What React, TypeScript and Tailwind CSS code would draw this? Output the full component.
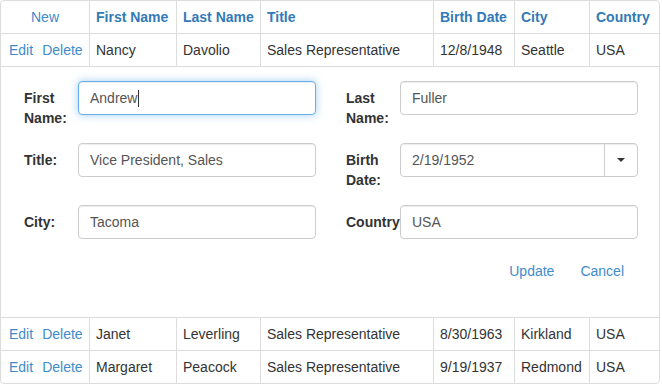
const rows = [
  { first: "Nancy", last: "Davolio", title: "Sales Representative", birth: "12/8/1948", city: "Seattle", country: "USA" },
  { first: "Janet", last: "Leverling", title: "Sales Representative", birth: "8/30/1963", city: "Kirkland", country: "USA" },
  { first: "Margaret", last: "Peacock", title: "Sales Representative", birth: "9/19/1937", city: "Redmond", country: "USA" },
];

const widths = ["w-[88px]", "w-[87px]", "w-[84px]", "w-[173px]", "w-[81px]", "w-[75px]", "w-[70px]"];

const Cell = ({ i, children, className = "" }: { i: number; children?: React.ReactNode; className?: string }) => (
  <div className={`${widths[i]} shrink-0 flex items-center ${i > 0 ? "border-l border-[#ddd] pl-[6px]" : ""} ${className}`}>
    {children}
  </div>
);

const DataRow = ({ r, last }: { r: (typeof rows)[number]; last?: boolean }) => (
  <div className={`flex ${last ? "h-[32px]" : "h-[33px] border-b border-[#ddd]"}`}>
    <Cell i={0} className="pl-[8px] gap-[9px] text-[#428bca]">
      <span>Edit</span>
      <span>Delete</span>
    </Cell>
    <Cell i={1}>{r.first}</Cell>
    <Cell i={2}>{r.last}</Cell>
    <Cell i={3}>{r.title}</Cell>
    <Cell i={4}>{r.birth}</Cell>
    <Cell i={5}>{r.city}</Cell>
    <Cell i={6}>{r.country}</Cell>
  </div>
);

const Field = ({ label, value, focused, date }: { label: string; value: string; focused?: boolean; date?: boolean }) => (
  <div className="flex items-start">
    <label className="w-[55px] shrink-0 pl-px pt-[7px] font-bold leading-[20px] text-[#333] whitespace-pre-line">{label}</label>
    <div
      className={`relative flex h-[34px] w-[238px] items-center rounded-[4px] border bg-white text-[#555] ${
        focused
          ? "border-[#66afe9] shadow-[inset_0_1px_1px_rgba(0,0,0,0.075),0_0_8px_rgba(102,175,233,0.6)]"
          : "border-[#ccc] shadow-[inset_0_1px_1px_rgba(0,0,0,0.075)]"
      }`}
    >
      <span className="pl-[11px] flex-1 flex items-center">
        {value}
        {focused && <span className="ml-px inline-block h-[17px] w-px bg-[#333]" />}
      </span>
      {date && (
        <span className="flex h-full w-[33px] items-center justify-center border-l border-[#ccc]">
          <span className="h-0 w-0 border-x-[4px] border-t-[4px] border-x-transparent border-t-[#333]" />
        </span>
      )}
    </div>
  </div>
);

export default function App() {
  return (
    <div className="w-[660px] h-[384px] border border-[#ddd] rounded-[4px] bg-white text-[14px] leading-[20px] text-[#333] font-['Liberation_Sans',Arial,sans-serif] overflow-hidden">
      <div className="flex h-[33px] border-b border-[#ddd] font-bold text-[#337ab7]">
        <Cell i={0} className="justify-center font-normal text-[#428bca]">New</Cell>
        <Cell i={1}>First Name</Cell>
        <Cell i={2}>Last Name</Cell>
        <Cell i={3}>Title</Cell>
        <Cell i={4}>Birth Date</Cell>
        <Cell i={5}>City</Cell>
        <Cell i={6}>Country</Cell>
      </div>
      <DataRow r={rows[0]} />
      <div className="h-[251px] border-b border-[#ddd] pl-[22px] pr-[21px] pt-[14px]">
        <div className="grid grid-cols-[293px_293px] gap-x-[29px] gap-y-[15px]">
          <Field label={"First\nName:"} value="Andrew" focused />
          <Field label={"Last\nName:"} value="Fuller" />
          <Field label="Title:" value="Vice President, Sales" />
          <Field label={"Birth\nDate:"} value="2/19/1952" date />
          <Field label="City:" value="Tacoma" />
          <Field label="Country" value="USA" />
        </div>
        <div className="mt-[22px] mr-[2px] flex justify-end gap-[2px] text-[#428bca]">
          <span className="px-3">Update</span>
          <span className="px-3">Cancel</span>
        </div>
      </div>
      <DataRow r={rows[1]} />
      <DataRow r={rows[2]} last />
    </div>
  );
}
